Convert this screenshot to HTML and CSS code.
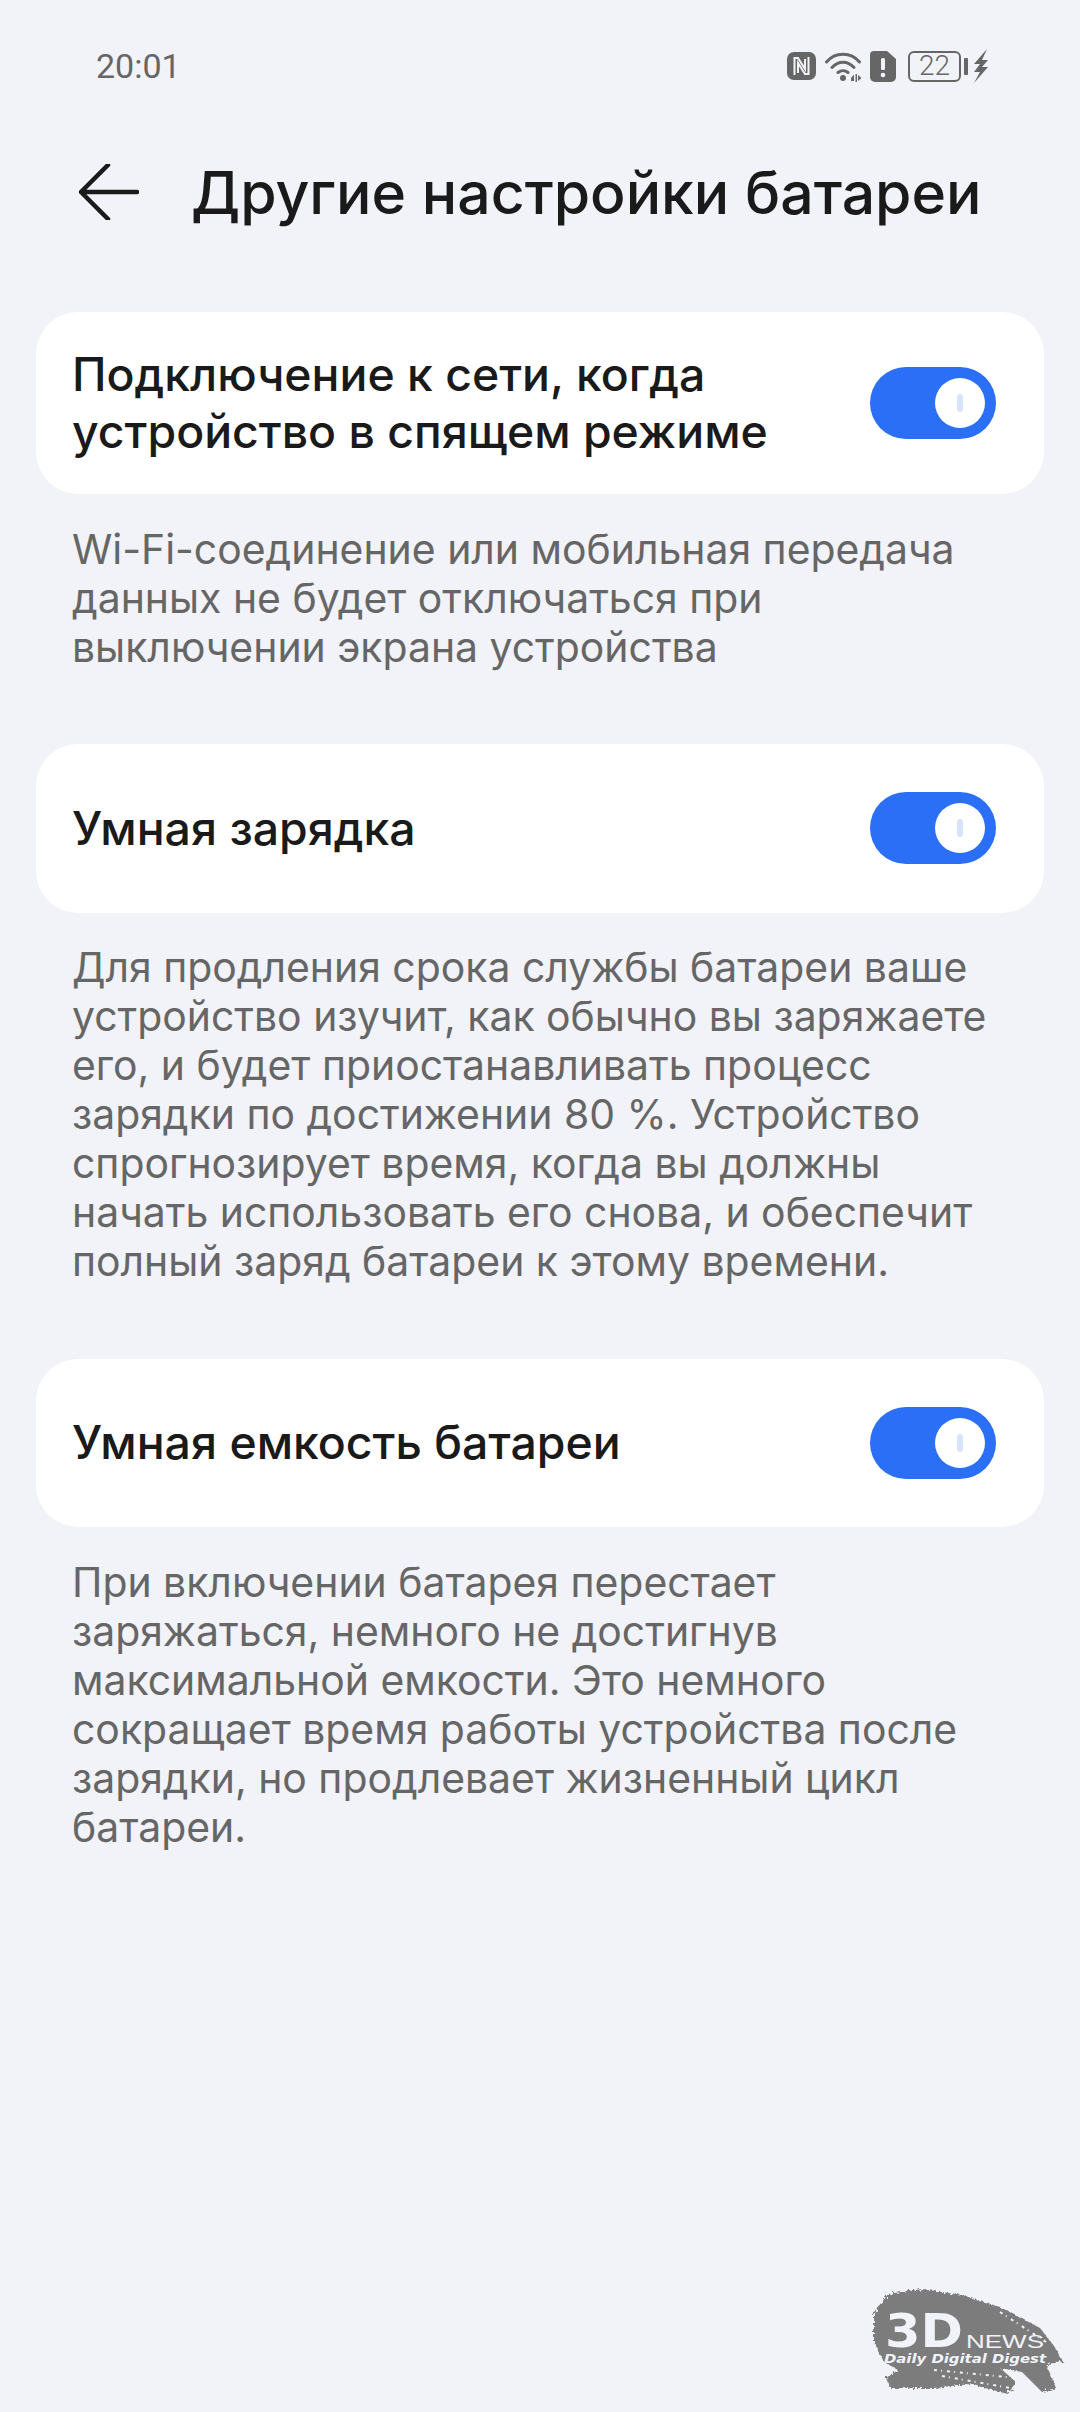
FILE: index.html
```html
<!DOCTYPE html>
<html lang="ru">
<head>
    <meta charset="UTF-8">
    <meta name="viewport" content="width=device-width, initial-scale=1.0">
    <title>Другие настройки батареи</title>
    <link rel="stylesheet" href="styles.css">
</head>
<body>
    <div class="status-bar">
        <span class="time">20:01</span>
        <div class="status-icons">
            <svg class="icon-nfc" width="29" height="28" viewBox="0 0 29 28">
                <rect x="0" y="0" width="29" height="28" rx="7" fill="#666"/>
                <path d="M7.500 23V6h3.500l7 11V7M21.500 5v17H18l-7-11v10" fill="none" stroke="#f1f3f8" stroke-width="2"/>
            </svg>
            <svg class="icon-wifi" width="37" height="31" viewBox="0 0 37 31">
                <path d="M1.500 11C10 0.500 26 0.500 34.500 11M7 16.500C13.500 9.500 22.500 9.500 29 16.500M13 21.500C16 19 20 19 23 21.500" fill="none" stroke="#666" stroke-width="3" stroke-linecap="round"/>
                <circle cx="18" cy="27" r="3" fill="#666"/>
                <path d="M26 27l3-3.500V30h-3zM30.500 23h1.500v8h-1.500zM33 24l3.500 3-3.500 3z" fill="#666"/>
            </svg>
            <svg class="icon-alert" width="26" height="31" viewBox="0 0 26 31">
                <path d="M4 0H17L26 8V26a5 5 0 0 1-5 5H5a5 5 0 0 1-5-5V4a4 4 0 0 1 4-4z" fill="#666"/>
                <rect x="11" y="7" width="4" height="12" rx="1.500" fill="#f1f3f8"/>
                <circle cx="13" cy="24" r="2.300" fill="#f1f3f8"/>
            </svg>
            <div class="battery">
                <div class="battery-body">22</div>
                <div class="battery-cap"></div>
            </div>
            <svg class="icon-bolt" width="14" height="34" viewBox="0 0 14 34">
                <path d="M13 0L0 15h6L0 23h6L0 34L14 18H8L14 11H8z" fill="#666"/>
            </svg>
        </div>
    </div>

    <div class="header">
        <svg class="back" width="60" height="56" viewBox="0 0 60 56">
            <path d="M2 28H58M29 1L2 28l27 27" fill="none" stroke="#1a1a1a" stroke-width="4.500" stroke-linecap="round" stroke-linejoin="round"/>
        </svg>
        <h1 class="title">Другие настройки батареи</h1>
    </div>

    <div class="section">
        <div class="card card-tall">
            <div class="card-text">Подключение к сети, когда<br>устройство в спящем режиме</div>
            <div class="switch"><div class="knob"><div class="knob-mark"></div></div></div>
        </div>
        <p class="desc">Wi-Fi-соединение или мобильная передача<br>данных не будет отключаться при<br>выключении экрана устройства</p>
    </div>

    <div class="section">
        <div class="card">
            <div class="card-text">Умная зарядка</div>
            <div class="switch"><div class="knob"><div class="knob-mark"></div></div></div>
        </div>
        <p class="desc">Для продления срока службы батареи ваше<br>устройство изучит, как обычно вы заряжаете<br>его, и будет приостанавливать процесс<br>зарядки по достижении 80 %. Устройство<br>спрогнозирует время, когда вы должны<br>начать использовать его снова, и обеспечит<br>полный заряд батареи к этому времени.</p>
    </div>

    <div class="section">
        <div class="card">
            <div class="card-text">Умная емкость батареи</div>
            <div class="switch"><div class="knob"><div class="knob-mark"></div></div></div>
        </div>
        <p class="desc">При включении батарея перестает<br>заряжаться, немного не достигнув<br>максимальной емкости. Это немного<br>сокращает время работы устройства после<br>зарядки, но продлевает жизненный цикл<br>батареи.</p>
    </div>

    <svg class="watermark" width="230" height="130" viewBox="0 0 230 130">
        <defs>
            <filter id="rough" x="-5%" y="-5%" width="110%" height="110%">
                <feTurbulence type="fractalNoise" baseFrequency="0.35" numOctaves="2" seed="4"/>
                <feDisplacementMap in="SourceGraphic" scale="7"/>
            </filter>
        </defs>
        <path class="wm-brush" d="M24 42L38 24L72 19L112 25L150 37L190 58L204 76L213 92L196 94L206 118L192 122L172 102L150 98L166 112L158 124L120 114L84 118L40 118L36 108L48 100L34 92L24 72z"/>
        <path class="wm-streak" d="M84 100L166 108M92 106L160 118M150 42L196 72"/>
        <text x="35" y="77" textLength="78" lengthAdjust="spacingAndGlyphs" class="wm-3d">3D</text>
        <text x="116" y="78" textLength="78" lengthAdjust="spacingAndGlyphs" class="wm-news">NEWS</text>
        <text x="34" y="93" textLength="162" lengthAdjust="spacingAndGlyphs" class="wm-digest">Daily Digital Digest</text>
    </svg>
</body>
</html>
```

FILE: styles.css
```css
html, body {
    margin: 0;
    padding: 0;
}

body {
    position: relative;
    width: 1080px;
    height: 2412px;
    overflow: hidden;
    background-color: #f1f3f8;
    font-family: "Inter", "Roboto", sans-serif;
    color: #1a1a1a;
}

.status-bar {
    display: flex;
    justify-content: space-between;
    align-items: center;
    height: 32px;
    padding: 50px 92px 0 96px;
}

.time {
    font-family: "Roboto", sans-serif;
    font-size: 34px;
    color: #666;
}

.status-icons {
    display: flex;
    align-items: center;
}

.icon-wifi {
    margin-left: 9px;
}

.icon-alert {
    margin-left: 8px;
}

.battery {
    display: flex;
    align-items: center;
    gap: 3px;
    margin-left: 12px;
}

.battery-body {
    box-sizing: border-box;
    width: 53px;
    height: 31px;
    border: 2.500px solid #666;
    border-radius: 6px;
    font-family: "Roboto", sans-serif;
    font-size: 28px;
    font-weight: 300;
    line-height: 26px;
    text-align: center;
    color: #666;
}

.battery-cap {
    width: 4px;
    height: 17px;
    background-color: #666;
    border-radius: 1px;
}

.icon-bolt {
    margin-left: 6px;
}

.header {
    display: flex;
    align-items: center;
    height: 80px;
    margin-top: 70px;
    padding-left: 79px;
}

.back {
    flex: none;
}

.title {
    margin: 0 0 0 52px;
    font-size: 58.900px;
    font-weight: 500;
    white-space: nowrap;
}

.section {
    margin: 72.500px 36px 0;
}

.header + .section {
    margin-top: 80px;
}

.card {
    display: flex;
    justify-content: space-between;
    align-items: center;
    height: 168.500px;
    padding: 0 48px 0 36px;
    background-color: #fff;
    border-radius: 42px;
}

.card-tall {
    height: 182px;
}

.card-text {
    font-size: 46.400px;
    font-weight: 500;
    line-height: 57px;
}

.switch {
    display: flex;
    justify-content: flex-end;
    align-items: center;
    box-sizing: border-box;
    width: 126px;
    height: 72px;
    padding-right: 11px;
    background-color: #2a6ff6;
    border-radius: 36px;
}

.knob {
    display: flex;
    justify-content: center;
    align-items: center;
    width: 50px;
    height: 50px;
    background-color: #fff;
    border-radius: 50%;
}

.knob-mark {
    width: 6px;
    height: 18px;
    background-color: #d9e4fb;
    border-radius: 3px;
}

.desc {
    margin: 30.500px 36px 0;
    font-size: 40.900px;
    line-height: 49px;
    color: #666;
    white-space: nowrap;
}

.watermark {
    position: absolute;
    left: 850px;
    top: 2270px;
}

.wm-brush {
    fill: #7b7b7d;
    filter: url(#rough);
}

.wm-streak {
    fill: none;
    stroke: #f1f3f8;
    stroke-width: 2;
    stroke-dasharray: 3 4 1 5;
}

.wm-3d {
    font-family: "DejaVu Sans", sans-serif;
    font-size: 46px;
    font-weight: 700;
    fill: #f1f3f8;
}

.wm-news {
    font-family: "Liberation Sans", sans-serif;
    font-size: 19px;
    fill: #f1f3f8;
}

.wm-digest {
    font-family: "DejaVu Sans", sans-serif;
    font-size: 13px;
    font-weight: 700;
    font-style: italic;
    fill: #f1f3f8;
}
```
